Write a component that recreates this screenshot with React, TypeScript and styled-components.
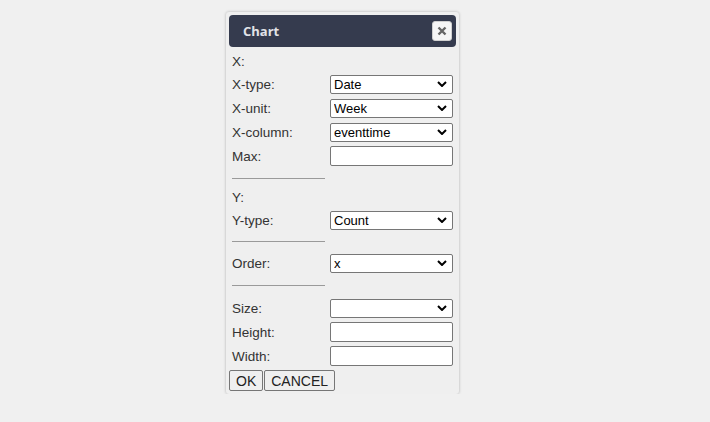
import React from "react";
import styled, { createGlobalStyle } from "styled-components";

const Global = createGlobalStyle`
  html, body { margin: 0; padding: 0; background: #f0f0f0; }
  body { font-family: "Liberation Sans", Arial, sans-serif; }
`;

const Page = styled.div`
  padding: 12px 0 0 226px;
`;

const Dialog = styled.div`
  width: 227px;
  padding: 3px 3px 3px 3px;
  background: #efefef;
  border-radius: 3px;
  box-shadow: 0 0 3px rgba(0, 0, 0, 0.28);
`;

const TitleBar = styled.div`
  height: 32px;
  background: #353b4e;
  border-radius: 4px;
  display: flex;
  align-items: center;
  justify-content: space-between;
  padding: 0 4px 0 14px;
`;

const Title = styled.span`
  color: #e2e3e8;
  font-family: "Open Sans", sans-serif;
  font-weight: 700;
  font-size: 13px;
`;

const CloseBtn = styled.button`
  width: 20px;
  height: 20px;
  padding: 0;
  border: 1px solid #d0d0d0;
  border-radius: 3px;
  background: #f6f6f6;
  display: flex;
  align-items: center;
  justify-content: center;
`;

const Body = styled.div`
  padding: 3px 3px 0 3px;
  font-size: 13px;
  color: #333;
`;

const Row = styled.div<{ $h?: number }>`
  display: grid;
  grid-template-columns: 98px 123px;
  align-items: center;
  height: ${(p) => p.$h ?? 24}px;
`;

const Label = styled.span`
  font-size: 13.5px;
  color: #333;
`;

const Select = styled.select`
  width: 123px;
  height: 19px;
  box-sizing: border-box;
  font-family: "Liberation Sans", Arial, sans-serif;
  font-size: 13px;
  color: #000;
  background: #fff;
  border: 1px solid #767676;
  border-radius: 2px;
  padding: 0 0 0 3px;
  appearance: none;
  background-image: url("data:image/svg+xml;utf8,<svg xmlns='http://www.w3.org/2000/svg' width='10' height='6' viewBox='0 0 10 6'><path d='M1 1l4 4 4-4' fill='none' stroke='black' stroke-width='2'/></svg>");
  background-repeat: no-repeat;
  background-position: right 5px center;
  background-size: 10px 6px;
`;

const Input = styled.input`
  width: 123px;
  height: 20px;
  box-sizing: border-box;
  border: 1px solid #767676;
  border-radius: 2px;
  background: #fff;
  padding: 0 3px;
`;

const Rule = styled.hr<{ $top: number; $bottom: number }>`
  width: 93px;
  margin: ${(p) => `${p.$top}px 0 ${p.$bottom}px 0`};
  border: 0;
  border-top: 1px solid #9a9a9a;
  height: 0;
`;

const Buttons = styled.div`
  display: flex;
  gap: 1px;
  margin-top: 2px;
`;

const Btn = styled.button`
  height: 21px;
  padding: 0 6px;
  font-family: "Liberation Sans", Arial, sans-serif;
  font-size: 14px;
  color: #222;
  background: #efefef;
  border: 1px solid #767676;
  border-radius: 2px;
`;

const Field: React.FC<{ label: string; h?: number; children?: React.ReactNode }> = ({ label, h, children }) => (
  <Row $h={h}>
    <Label>{label}</Label>
    {children}
  </Row>
);

export default function App() {
  return (
    <>
      <Global />
      <Page>
        <Dialog>
          <TitleBar>
            <Title>Chart</Title>
            <CloseBtn>
              <svg width="10" height="10" viewBox="0 0 10 10">
                <path d="M1.5 1.5l7 7M8.5 1.5l-7 7" stroke="#666" strokeWidth="2.4" />
              </svg>
            </CloseBtn>
          </TitleBar>
          <Body>
            <Field label="X:" h={22} />
            <Field label="X-type:">
              <Select defaultValue="Date"><option>Date</option></Select>
            </Field>
            <Field label="X-unit:">
              <Select defaultValue="Week"><option>Week</option></Select>
            </Field>
            <Field label="X-column:">
              <Select defaultValue="eventtime"><option>eventtime</option></Select>
            </Field>
            <Field label="Max:">
              <Input />
            </Field>
            <Rule $top={10} $bottom={7} />
            <Field label="Y:" h={22} />
            <Field label="Y-type:">
              <Select defaultValue="Count"><option>Count</option></Select>
            </Field>
            <Rule $top={9} $bottom={9} />
            <Field label="Order:">
              <Select defaultValue="x"><option>x</option></Select>
            </Field>
            <Rule $top={10} $bottom={10} />
            <Field label="Size:">
              <Select defaultValue=""><option value=""></option></Select>
            </Field>
            <Field label="Height:">
              <Input />
            </Field>
            <Field label="Width:">
              <Input />
            </Field>
          </Body>
          <Buttons>
            <Btn>OK</Btn>
            <Btn>CANCEL</Btn>
          </Buttons>
        </Dialog>
      </Page>
    </>
  );
}
